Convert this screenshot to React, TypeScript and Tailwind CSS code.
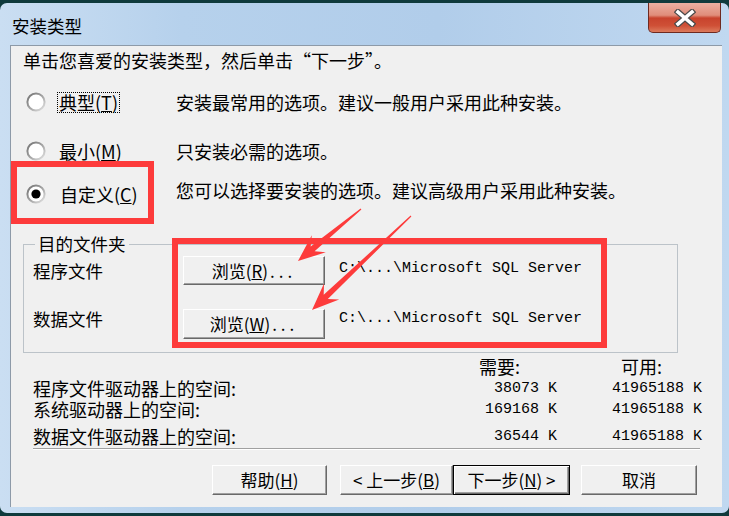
import React from "react";

type Pt = [number, number];

function arrowPoints(T: Pt, P: Pt): string {
  const dx = P[0] - T[0];
  const dy = P[1] - T[1];
  const len = Math.hypot(dx, dy);
  const u: Pt = [dx / len, dy / len];
  const n: Pt = [u[1], -u[0]];
  const at = (base: Pt, back: number, side: number): Pt => [
    base[0] - u[0] * back + n[0] * side,
    base[1] - u[1] * back + n[1] * side,
  ];
  const pts: Pt[] = [
    at(T, 0, 0.6),
    at(P, 19, 3),
    at(P, 27, 11),
    P,
    at(P, 27, -11),
    at(P, 19, -3),
    at(T, 0, -0.6),
  ];
  return pts.map((p) => `${p[0].toFixed(1)},${p[1].toFixed(1)}`).join(" ");
}

function Radio({ checked }: { checked?: boolean }) {
  return (
    <svg width="20" height="20" viewBox="0 0 20 20" className="shrink-0">
      <defs>
        <linearGradient id="rg" x1="0" y1="0" x2="1" y2="1">
          <stop offset="0" stopColor="#707070" />
          <stop offset="0.55" stopColor="#a8a8a8" />
          <stop offset="1" stopColor="#e6e6e6" />
        </linearGradient>
      </defs>
      <circle cx="10" cy="10" r="8.6" fill="#fff" stroke="url(#rg)" strokeWidth="2" />
      {checked && <circle cx="10" cy="10" r="4.6" fill="#000" />}
    </svg>
  );
}

const btn =
  "h-full flex items-center justify-center bg-[#f0f0f0] border border-t-white border-l-white border-r-[#696969] border-b-[#696969] shadow-[inset_-1px_-1px_0_#a0a0a0] text-[17px] leading-[20px]";

const mono = "font-['Liberation_Mono',monospace] text-[15px]";

export default function App() {
  return (
    <div className="relative w-[729px] h-[516px] overflow-hidden bg-[#0f3a3c] text-black font-['Noto_Sans_CJK_SC','Noto_Sans',sans-serif]">
      <div className="mt-[3px] h-[510px] rounded-[7px] flex flex-col bg-[linear-gradient(90deg,#cadef2_0%,#b6d1ec_25%,#b1cdea_60%,#c0d8f0_100%)]">
        {/* Title bar */}
        <div className="h-[42px] flex items-start justify-between">
          <div className="pl-[12px] pt-[13px] text-[17.5px] leading-[20px]">安装类型</div>
          <div className="w-[73px] h-[30px] mr-[8px] rounded-b-[5px] border border-t-0 border-[#6e2a20] flex items-center justify-center bg-[linear-gradient(180deg,#eab0a2_0%,#e08d7a_42%,#c8432d_52%,#cf5036_78%,#dc7a5c_100%)]">
            <svg width="22" height="18" viewBox="0 0 22 18">
              <path d="M4 3 L18 15 M18 3 L4 15" stroke="#4a4a4a" strokeWidth="6" strokeLinecap="square" />
              <path d="M4 3 L18 15 M18 3 L4 15" stroke="#fff" strokeWidth="3.6" strokeLinecap="square" />
            </svg>
          </div>
        </div>

        {/* Client area */}
        <div className="ml-[10px] mr-[7px] h-[462px] bg-[#f0f0f0] border-l border-t border-[#8d9aa8] flex flex-col">
          <div className="pl-[12px] pt-[5px] text-[18px] leading-[18px]">
            单击您喜爱的安装类型，然后单击“下一步”。
          </div>

          {/* Radios */}
          <div className="mt-[21px] h-[24px] flex items-center pl-[15px] text-[18px]">
            <Radio />
            <div className="ml-[11px] w-[119px]">
              <span className="inline-block border border-dotted border-black px-[1px] leading-[19px]">
                典型(<u>T</u>)
              </span>
            </div>
            <div className="leading-[20px]">安装最常用的选项。建议一般用户采用此种安装。</div>
          </div>
          <div className="mt-[25px] h-[24px] flex items-center pl-[15px] text-[18px]">
            <Radio />
            <div className="ml-[11px] w-[119px] pl-[2px] leading-[20px]">
              最小(<u>M</u>)
            </div>
            <div className="leading-[20px]">只安装必需的选项。</div>
          </div>
          <div className="mt-[19px] h-[24px] flex items-center pl-[15px] text-[18px]">
            <Radio checked />
            <div className="ml-[11px] w-[119px] pl-[3px] leading-[20px]">
              自定义(<u>C</u>)
            </div>
            <div className="leading-[20px] mb-[8px]">您可以选择要安装的选项。建议高级用户采用此种安装。</div>
          </div>

          {/* Group box */}
          <fieldset className="mt-[29px] ml-[12px] w-[655px] h-[118px] border border-[#bcc3c9] text-[17.5px]">
            <legend className="ml-[11px] px-[3px] leading-[18px]">目的文件夹</legend>
            <div className="mt-[3px] h-[29px] flex items-center pl-[9px]">
              <div className="w-[150px] leading-[20px]">程序文件</div>
              <div className="w-[142px] h-[29px]">
                <div className={btn}>
                  浏览(<u>R</u>)<span className="tracking-[4px] pl-[2px]">...</span>
                </div>
              </div>
              <div className={`ml-[14px] mb-[3px] leading-[20px] ${mono}`}>
                C:\...\Microsoft SQL Server
              </div>
            </div>
            <div className="mt-[24px] h-[30px] flex items-center pl-[9px]">
              <div className="w-[150px] leading-[20px] mb-[10px]">数据文件</div>
              <div className="w-[142px] h-[30px]">
                <div className={btn}>
                  浏览(<u>W</u>)<span className="tracking-[4px] pl-[2px]">...</span>
                </div>
              </div>
              <div className={`ml-[14px] mb-[10px] leading-[20px] ${mono}`}>
                C:\...\Microsoft SQL Server
              </div>
            </div>
          </fieldset>

          {/* Space table */}
          <div className="pl-[22px] text-[18px]">
            <div className="mt-[3px] h-[20px] flex items-center leading-[19px]">
              <div className="w-[424px]" />
              <div className="w-[100px] pl-[22px]">需要:</div>
              <div className="w-[145px] pl-[64px]">可用:</div>
            </div>
            <div className="mt-[2px] h-[20px] flex items-center leading-[19px]">
              <div className="w-[424px]">程序文件驱动器上的空间:</div>
              <div className={`w-[100px] text-right ${mono}`}>38073 K</div>
              <div className={`w-[145px] text-right ${mono}`}>41965188 K</div>
            </div>
            <div className="mt-[1px] h-[20px] flex items-center leading-[19px]">
              <div className="w-[424px]">系统驱动器上的空间:</div>
              <div className={`w-[100px] text-right ${mono}`}>169168 K</div>
              <div className={`w-[145px] text-right ${mono}`}>41965188 K</div>
            </div>
            <div className="mt-[7px] h-[20px] flex items-center leading-[19px]">
              <div className="w-[424px]">数据文件驱动器上的空间:</div>
              <div className={`w-[100px] text-right ${mono}`}>36544 K</div>
              <div className={`w-[145px] text-right ${mono}`}>41965188 K</div>
            </div>
          </div>

          {/* Separator */}
          <div className="mt-[2px] ml-[22px] w-[667px] h-[2px] border-t border-[#a0a0a0] border-b border-b-white" />

          {/* Buttons */}
          <div className="mt-[15px] ml-[201px] h-[30px] flex">
            <div className="w-[115px]">
              <div className={btn}>
                帮助(<u>H</u>)
              </div>
            </div>
            <div className="w-[113px] ml-[13px]">
              <div className={btn}>
                &lt; 上一步(<u>B</u>)
              </div>
            </div>
            <div className="w-[117px]">
              <div className="h-full flex items-center justify-center bg-[#f0f0f0] border border-black shadow-[inset_1px_1px_0_#fff,inset_-1px_-1px_0_#696969,inset_-2px_-2px_0_#a0a0a0] text-[17px] leading-[20px]">
                下一步(<u>N</u>) &gt;
              </div>
            </div>
            <div className="w-[116px] ml-[11px]">
              <div className={btn}>取消</div>
            </div>
          </div>
        </div>
      </div>

      {/* Annotation overlays */}
      <div className="absolute left-[11px] top-[161px] w-[143px] h-[63px] border-[6px] border-[#fd3b3b] pointer-events-none" />
      <div className="absolute left-[172px] top-[238px] w-[435px] h-[110px] border-[6px] border-[#fd3b3b] pointer-events-none" />
      <svg className="absolute inset-0 pointer-events-none" width="729" height="516" viewBox="0 0 729 516">
        <polygon points={arrowPoints([361, 209], [298, 261])} fill="#fd3b3b" />
        <polygon points={arrowPoints([411, 216], [312, 310])} fill="#fd3b3b" />
      </svg>
    </div>
  );
}
